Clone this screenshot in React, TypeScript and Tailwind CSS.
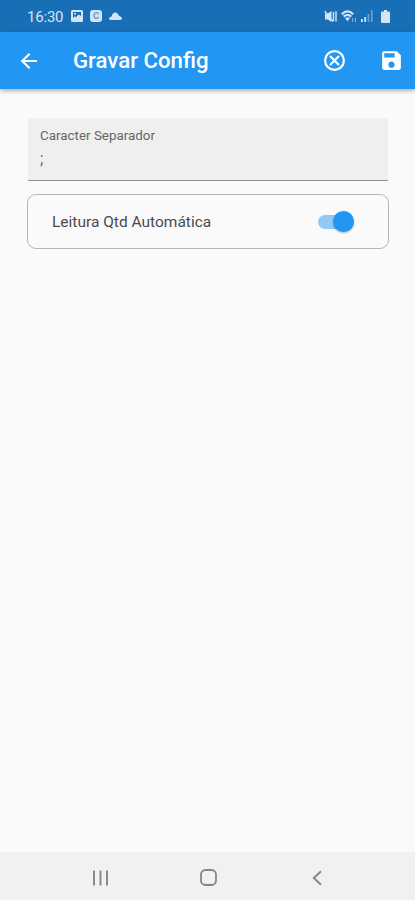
import React, { useState } from 'react';
import { MdSave } from 'react-icons/md';

function StatusBar() {
  return (
    <div className="h-8 shrink-0 bg-[#196fb6] flex items-center justify-between pl-[27px] pr-[25px] text-[#d3e5f5]">
      <div className="flex items-center">
        <span className="w-11 text-[15px] leading-8 tracking-[-0.2px] pt-px">16:30</span>
        {/* Picture */}
        <svg className="w-3 h-3" viewBox="0 0 12 12">
          <rect width="12" height="12" rx="1.5" fill="currentColor" />
          <path d="M2 2h8v4L7.5 4.5 5 7.2 3.8 6.2 2 8z" fill="#196fb6" />
          <circle cx="4" cy="3.8" r="1" fill="currentColor" />
        </svg>
        {/* App notification */}
        <div className="ml-[7px] w-3 h-3 rounded-[3px] bg-[#d3e5f5] text-[#5f9bd0] text-[9px] font-bold leading-3 text-center">
          C
        </div>
        <svg className="ml-[7px] w-[13px] h-2" viewBox="0 0 13 8" fill="currentColor">
          <path d="M1.6 8C-.3 8-.4 5.6 1.3 4.9L2.6 4.4C3.2 1.2 6-.6 8.3 1.3L10.3 4l1.6.8C13.6 5.8 13.2 8 11.4 8z" />
        </svg>
      </div>

      <div className="flex items-center">
        {/* Vibrate / muted */}
        <svg className="w-[13px] h-[13px]" viewBox="0 0 13 13">
          <path d="M1 3.5h2.8L7.5 1v11L3.8 9.4H1z" fill="currentColor" />
          <path d="M.8 1.2l8.4 10.4M9.5 2v9M12 1.2v10.4" fill="none" stroke="currentColor" strokeWidth="1.4" />
        </svg>
        <svg className="ml-1 w-4 h-[13px]" viewBox="0 0 16 13" fill="none" stroke="currentColor">
          <path d="M.8 4.2Q6.5-1.3 12.2 4.2M2.8 6.6q3.7-3.5 7.4 0" strokeWidth="2.2" />
          <path d="M4.1 8.2q2.4-1.9 4.8 0L6.5 11.2z" fill="currentColor" stroke="none" />
          <path d="M11.7 8v4M14.5 8v4" strokeWidth="1" opacity=".6" />
        </svg>
        <svg className="ml-1 w-3 h-3" viewBox="0 0 12 12" fill="currentColor">
          <path d="M0 9h1.8v3H0zM3.3 7h1.8v5H3.3z" />
          <path d="M6.6 4h1.6v8H6.6zM10 0h1.6v12H10z" opacity=".45" />
        </svg>
        <svg className="ml-2 w-[9px] h-[13px]" viewBox="0 0 9 13" fill="currentColor">
          <path d="M3 0h3v1.5h2a1 1 0 0 1 1 1V12a1 1 0 0 1-1 1H1a1 1 0 0 1-1-1V2.5a1 1 0 0 1 1-1h2z" />
        </svg>
      </div>
    </div>
  );
}

function NavBar() {
  return (
    <div className="h-12 shrink-0 bg-[#f1f1f1] flex items-center justify-between pl-[92px] pr-[90px] pt-[3px] text-[#858585]">
      <svg className="w-4 h-4" viewBox="0 0 16 16" stroke="currentColor" strokeWidth="1.9">
        <path d="M2 .5v15M8.5 .5v15M15 .5v15" />
      </svg>
      <svg className="w-[17px] h-[17px]" viewBox="0 0 17 17" fill="none" stroke="currentColor" strokeWidth="1.8">
        <rect x="1" y="1" width="15" height="15" rx="4.5" />
      </svg>
      <svg className="w-4 h-4" viewBox="0 0 16 16" fill="none" stroke="currentColor" strokeWidth="1.9">
        <path d="M12 1.2L4.8 8l7.2 6.8" />
      </svg>
    </div>
  );
}

export default function App() {
  const [separador, setSeparador] = useState(';');
  const [automatica, setAutomatica] = useState(true);

  return (
    <div className="h-[900px] flex flex-col bg-[#fafafa] font-[Roboto,sans-serif]">
      <StatusBar />

      {/* App bar */}
      <header className="relative h-[57px] shrink-0 bg-[#2196f3] text-white flex items-center pl-[17px] pr-[11px] shadow-[0_2px_4px_rgba(0,0,0,0.3)]">
        <button aria-label="Voltar">
          <svg className="w-6 h-6" viewBox="0 0 24 24" fill="none" stroke="currentColor" strokeWidth="2.2">
            <path d="M20 12H5.5M12.6 4.7L5.3 12l7.3 7.3" />
          </svg>
        </button>
        <h1 className="flex-1 ml-8 text-[22.2px] font-medium">Gravar Config</h1>
        <button aria-label="Cancelar" className="mr-8">
          <svg className="w-[25px] h-[25px]" viewBox="0 0 25 25" fill="none" stroke="currentColor" strokeWidth="2.2">
            <circle cx="12.5" cy="12.5" r="9.4" />
            <path d="M8 8l9 9M17 8l-9 9" />
          </svg>
        </button>
        <button aria-label="Gravar">
          <MdSave size={25} />
        </button>
      </header>

      <main className="flex-1 pl-[27px] pr-[26px] pt-[29px]">
        <label className="block mx-px h-[63px] rounded-t-[4px] bg-[#efefef] border-b border-[#929292] px-3 pt-2.5">
          <span className="block text-[13.4px] leading-4 text-[#666666]">Caracter Separador</span>
          <input
            className="block w-full mt-[5px] text-base leading-5 text-[#666666] outline-none"
            value={separador}
            onChange={(e) => setSeparador(e.target.value)}
          />
        </label>

        <div className="mt-[13px] h-[55px] flex items-center justify-between rounded-[9px] border border-[#b5b5b5] pl-6 pr-[34px]">
          <span className="pt-0.5 text-[15.5px] text-[#4a4a4a]">Leitura Qtd Automática</span>
          <button
            role="switch"
            aria-checked={automatica}
            onClick={() => setAutomatica(!automatica)}
            className="w-9 h-[14px] rounded-full bg-[#90caf9] flex items-center justify-end"
          >
            <span className="w-[21px] h-[21px] shrink-0 rounded-full bg-[#2196f3] shadow-[0_1px_2px_rgba(0,0,0,0.3)]"></span>
          </button>
        </div>
      </main>

      <NavBar />
    </div>
  );
}
